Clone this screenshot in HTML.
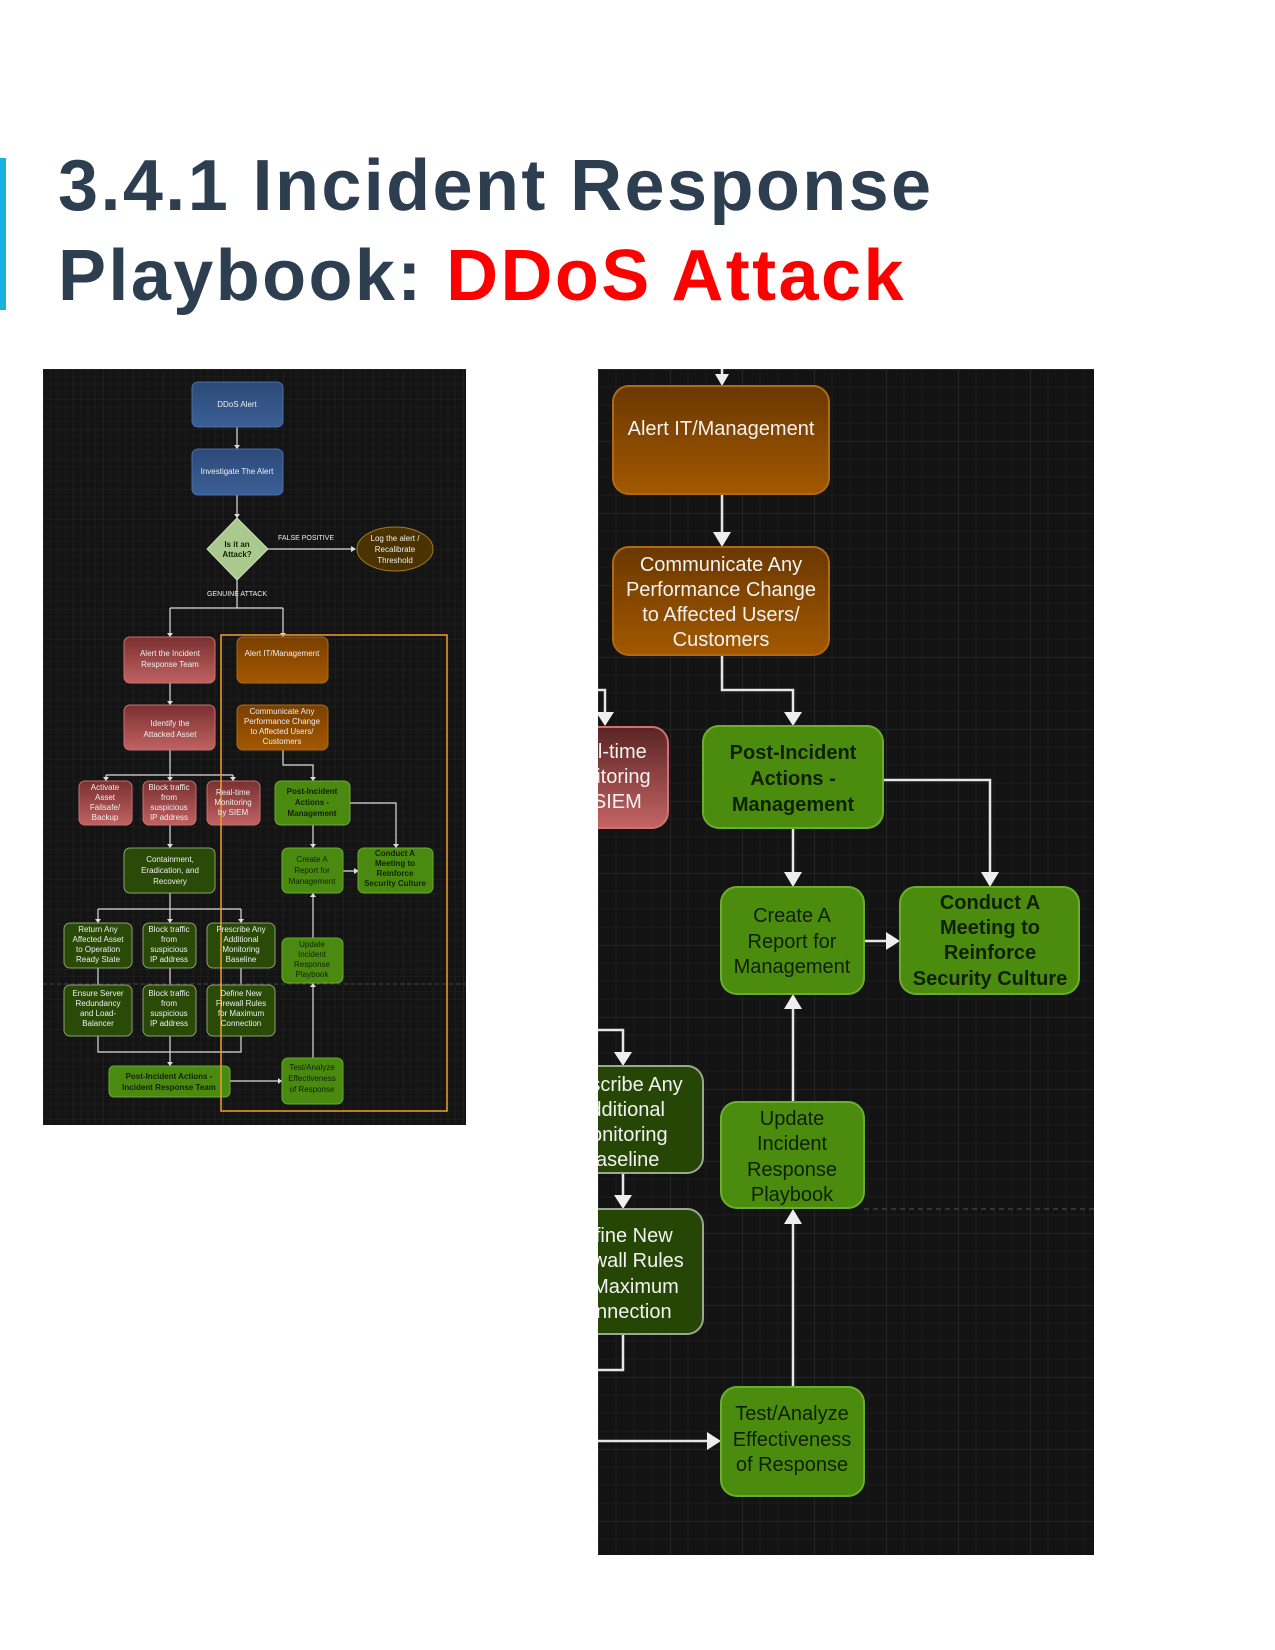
<!DOCTYPE html>
<html><head><meta charset="utf-8"><style>
html,body{margin:0;padding:0;background:#fff;}
body{width:1275px;height:1650px;position:relative;overflow:hidden;font-family:"Liberation Sans",sans-serif;}
.bar{position:absolute;left:0;top:158px;width:6px;height:152px;background:#1ab0e0;}
h1{position:absolute;left:58px;top:141px;margin:0;font-family:"Liberation Sans",sans-serif;font-weight:bold;font-size:72px;line-height:90px;color:#2d3e50;letter-spacing:2.4px;}
h1 span{color:#ff0000;}
svg{position:absolute;display:block;}
</style></head><body>
<div class="bar"></div>
<h1>3.4.1 Incident Response<br>Playbook: <span>DDoS Attack</span></h1>

<svg style="left:43px;top:369px" width="423" height="756" viewBox="43 369 423 756" font-family="Liberation Sans, sans-serif">
<defs>
<pattern id="g1" x="43" y="369" width="30" height="30" patternUnits="userSpaceOnUse">
<path d="M7.5 0V30M15 0V30M22.5 0V30M0 7.5H30M0 15H30M0 22.5H30" stroke="#1f1f1f" stroke-width="0.6"/>
<path d="M0 0V30M0 0H30" stroke="#2c2c2c" stroke-width="0.8"/>
</pattern>
<linearGradient id="lb" x1="0" y1="0" x2="0" y2="1"><stop offset="0" stop-color="#2c4a78"/><stop offset="1" stop-color="#3b5f96"/></linearGradient>
<linearGradient id="lr" x1="0" y1="0" x2="0" y2="1"><stop offset="0" stop-color="#7a3030"/><stop offset="1" stop-color="#c06262"/></linearGradient>
<linearGradient id="lo" x1="0" y1="0" x2="0" y2="1"><stop offset="0" stop-color="#7a3f00"/><stop offset="1" stop-color="#a35800"/></linearGradient>
</defs>
<rect x="43" y="369" width="423" height="756" fill="#141414"/>
<rect x="43" y="369" width="423" height="756" fill="url(#g1)"/>
<g stroke="#ddd" stroke-width="1.2" fill="none">
<path d="M237 427V449M237 495V518M268 549H355M237 580V608M170 608H283M170 608V637M283 608V637M170 683V705M170 750V775M106 775H233M106 775V781M170 775V781M233 775V781M283 750V765H313V781M170 825V848M313 825V848M350 803H396V848M343 871H358M170 893V909M98 909H241M98 909V923M170 909V923M241 909V923M98 968V985M170 968V985M241 968V985M98 1036V1052H241V1036M170 1036V1066M230 1081H282M313 1058V983M313 938V893"/>
</g>
<path d="M43 984H466" stroke="#555" stroke-dasharray="4,3" stroke-width="0.8"/>
<g fill="#ddd">
<path d="M234 445l3 4 3-4z M234 514l3 4 3-4z M351 546l5 3-5 3z M167 633l3 4 3-4z M280 633l3 4 3-4z M167 701l3 4 3-4z M103 777l3 4 3-4z M167 777l3 4 3-4z M230 777l3 4 3-4z M310 777l3 4 3-4z M167 844l3 4 3-4z M310 844l3 4 3-4z M393 844l3 4 3-4z M354 868l5 3-5 3z M95 919l3 4 3-4z M167 919l3 4 3-4z M238 919l3 4 3-4z M167 1062l3 4 3-4z M278 1078l4 3-4 3z M310 897l3-4 3 4z M310 987l3-4 3 4z"/>
</g>
<rect x="192" y="382" width="91" height="45" rx="6" fill="url(#lb)" stroke="#4a6ea8"/>
<rect x="192" y="449" width="91" height="46" rx="6" fill="url(#lb)" stroke="#4a6ea8"/>
<path d="M237 518L268 549L237 580L207 549Z" fill="#a9c98f" stroke="#c8e0b0"/>
<ellipse cx="395" cy="549" rx="38" ry="22" fill="#4a3300" stroke="#a07a20"/>
<rect x="124" y="637" width="91" height="46" rx="6" fill="url(#lr)" stroke="#c87070"/>
<rect x="124" y="705" width="91" height="45" rx="6" fill="url(#lr)" stroke="#c87070"/>
<rect x="237" y="637" width="91" height="46" rx="6" fill="url(#lo)" stroke="#b06a10"/>
<rect x="237" y="705" width="91" height="45" rx="6" fill="url(#lo)" stroke="#b06a10"/>
<rect x="79" y="781" width="53" height="44" rx="6" fill="url(#lr)" stroke="#c87070"/>
<rect x="143" y="781" width="53" height="44" rx="6" fill="url(#lr)" stroke="#c87070"/>
<rect x="207" y="781" width="53" height="44" rx="6" fill="url(#lr)" stroke="#c87070"/>
<rect x="275" y="781" width="75" height="44" rx="6" fill="#4a8a10" stroke="#6aaa30"/>
<rect x="124" y="848" width="91" height="45" rx="6" fill="#2a4a08" stroke="#88a070"/>
<rect x="282" y="848" width="61" height="45" rx="6" fill="#4a8a10" stroke="#6aaa30"/>
<rect x="358" y="848" width="75" height="45" rx="6" fill="#4a8a10" stroke="#6aaa30"/>
<rect x="64" y="923" width="68" height="45" rx="6" fill="#2a4a08" stroke="#88a070"/>
<rect x="143" y="923" width="53" height="45" rx="6" fill="#2a4a08" stroke="#88a070"/>
<rect x="207" y="923" width="68" height="45" rx="6" fill="#2a4a08" stroke="#88a070"/>
<rect x="64" y="985" width="68" height="51" rx="6" fill="#2a4a08" stroke="#88a070"/>
<rect x="143" y="985" width="53" height="51" rx="6" fill="#2a4a08" stroke="#88a070"/>
<rect x="207" y="985" width="68" height="51" rx="6" fill="#2a4a08" stroke="#88a070"/>
<rect x="282" y="938" width="61" height="45" rx="6" fill="#4a8a10" stroke="#6aaa30"/>
<rect x="109" y="1066" width="121" height="31" rx="5" fill="#4a8a10" stroke="#6aaa30"/>
<rect x="282" y="1058" width="61" height="46" rx="6" fill="#4a8a10" stroke="#6aaa30"/>
<rect x="221" y="635" width="226" height="476" fill="none" stroke="#f0a030" stroke-width="1.5"/>
<g font-size="8" fill="#eee" text-anchor="middle">
<text x="237" y="407">DDoS Alert</text>
<text x="237" y="474">Investigate The Alert</text>
<text x="278" y="540" text-anchor="start" font-size="7">FALSE POSITIVE</text>
<text x="395" y="541">Log the alert /</text><text x="395" y="552">Recalibrate</text><text x="395" y="563">Threshold</text>
<text x="237" y="596" font-size="7">GENUINE ATTACK</text>
<text x="170" y="656">Alert the Incident</text><text x="170" y="667">Response Team</text>
<text x="170" y="726">Identify the</text><text x="170" y="737">Attacked Asset</text>
<text x="282" y="656">Alert IT/Management</text>
<text x="282" y="714">Communicate Any</text><text x="282" y="724">Performance Change</text><text x="282" y="734">to Affected Users/</text><text x="282" y="744">Customers</text>
<text x="105" y="790">Activate</text><text x="105" y="800">Asset</text><text x="105" y="810">Failsafe/</text><text x="105" y="820">Backup</text>
<text x="169" y="790">Block traffic</text><text x="169" y="800">from</text><text x="169" y="810">suspicious</text><text x="169" y="820">IP address</text>
<text x="233" y="795">Real-time</text><text x="233" y="805">Monitoring</text><text x="233" y="815">by SIEM</text>
<text x="170" y="862">Containment,</text><text x="170" y="873">Eradication, and</text><text x="170" y="884">Recovery</text>
<text x="98" y="932">Return Any</text><text x="98" y="942">Affected Asset</text><text x="98" y="952">to Operation</text><text x="98" y="962">Ready State</text>
<text x="169" y="932">Block traffic</text><text x="169" y="942">from</text><text x="169" y="952">suspicious</text><text x="169" y="962">IP address</text>
<text x="241" y="932">Prescribe Any</text><text x="241" y="942">Additional</text><text x="241" y="952">Monitoring</text><text x="241" y="962">Baseline</text>
<text x="98" y="996">Ensure Server</text><text x="98" y="1006">Redundancy</text><text x="98" y="1016">and Load-</text><text x="98" y="1026">Balancer</text>
<text x="169" y="996">Block traffic</text><text x="169" y="1006">from</text><text x="169" y="1016">suspicious</text><text x="169" y="1026">IP address</text>
<text x="241" y="996">Define New</text><text x="241" y="1006">Firewall Rules</text><text x="241" y="1016">for Maximum</text><text x="241" y="1026">Connection</text>
</g>
<g font-size="8" fill="#122400" text-anchor="middle">
<text x="237" y="547" font-weight="bold">Is it an</text><text x="237" y="557" font-weight="bold">Attack?</text>
<text x="312" y="794" font-weight="bold">Post-Incident</text><text x="312" y="805" font-weight="bold">Actions -</text><text x="312" y="816" font-weight="bold">Management</text>
<text x="312" y="862">Create A</text><text x="312" y="873">Report for</text><text x="312" y="884">Management</text>
<text x="395" y="856" font-weight="bold">Conduct A</text><text x="395" y="866" font-weight="bold">Meeting to</text><text x="395" y="876" font-weight="bold">Reinforce</text><text x="395" y="886" font-weight="bold">Security Culture</text>
<text x="312" y="947">Update</text><text x="312" y="957">Incident</text><text x="312" y="967">Response</text><text x="312" y="977">Playbook</text>
<text x="169" y="1079" font-weight="bold">Post-Incident Actions -</text><text x="169" y="1090" font-weight="bold">Incident Response Team</text>
<text x="312" y="1070">Test/Analyze</text><text x="312" y="1081">Effectiveness</text><text x="312" y="1092">of Response</text>
</g>
</svg>

<svg style="left:598px;top:369px" width="496" height="1186" viewBox="598 369 496 1186" font-family="Liberation Sans, sans-serif">
<defs>
<pattern id="g2" x="598" y="369" width="72" height="72" patternUnits="userSpaceOnUse">
<path d="M18 0V72M36 0V72M54 0V72M0 18H72M0 36H72M0 54H72" stroke="#1c1c1c" stroke-width="1"/>
<path d="M0 0V72M0 0H72" stroke="#2a2a2a" stroke-width="1.5"/>
</pattern>
<linearGradient id="ro" x1="0" y1="0" x2="0" y2="1"><stop offset="0" stop-color="#6a3800"/><stop offset="1" stop-color="#a35800"/></linearGradient>
<linearGradient id="rr" x1="0" y1="0" x2="0" y2="1"><stop offset="0" stop-color="#5a2424"/><stop offset="1" stop-color="#c46464"/></linearGradient>
</defs>
<rect x="598" y="369" width="496" height="1186" fill="#131313"/>
<rect x="598" y="369" width="496" height="1186" fill="url(#g2)"/>
<path d="M864 1209H1094" stroke="#555" stroke-dasharray="5,4" stroke-width="1"/>
<g stroke="#e6e6e6" stroke-width="2.5" fill="none">
<path d="M722 369V380M722 494V540M722 655V690H793V720M598 690H605V720M793 828V880M883 780H990V880M864 941H893M793 1102V1002M793 1387V1215M598 1030H623V1060M623 1173V1203M623 1334V1370H598M598 1441H715"/>
</g>
<g fill="#eee">
<path d="M715 374l7 12 7-12z M713 532l9 15 9-15z M784 712l9 14 9-14z M596 712l9 14 9-14z M784 872l9 15 9-15z M981 872l9 15 9-15z M886 932l14 9-14 9z M784 1009l9-15 9 15z M614 1052l9 14 9-14z M614 1195l9 14 9-14z M784 1224l9-15 9 15z M707 1432l14 9-14 9z"/>
</g>
<rect x="613" y="386" width="216" height="108" rx="16" fill="url(#ro)" stroke="#b06a10" stroke-width="2"/>
<rect x="613" y="547" width="216" height="108" rx="16" fill="url(#ro)" stroke="#b06a10" stroke-width="2"/>
<rect x="541" y="727" width="127" height="101" rx="16" fill="url(#rr)" stroke="#d07070" stroke-width="2"/>
<rect x="703" y="726" width="180" height="102" rx="16" fill="#4b8c0e" stroke="#6cae2c" stroke-width="2"/>
<rect x="721" y="887" width="143" height="107" rx="16" fill="#4b8c0e" stroke="#6cae2c" stroke-width="2"/>
<rect x="900" y="887" width="179" height="107" rx="16" fill="#4b8c0e" stroke="#6cae2c" stroke-width="2"/>
<rect x="540" y="1066" width="163" height="107" rx="16" fill="#264606" stroke="#9aa890" stroke-width="2"/>
<rect x="721" y="1102" width="143" height="106" rx="16" fill="#4b8c0e" stroke="#6cae2c" stroke-width="2"/>
<rect x="540" y="1209" width="163" height="125" rx="16" fill="#264606" stroke="#9aa890" stroke-width="2"/>
<rect x="721" y="1387" width="143" height="109" rx="16" fill="#4b8c0e" stroke="#6cae2c" stroke-width="2"/>
<g font-size="20" fill="#f2f2f2" text-anchor="middle">
<text x="721" y="435">Alert IT/Management</text>
<text x="721" y="571">Communicate Any</text><text x="721" y="596">Performance Change</text><text x="721" y="621">to Affected Users/</text><text x="721" y="646">Customers</text>
<text x="604" y="758">Real-time</text><text x="604" y="783">Monitoring</text><text x="604" y="808">by SIEM</text>
<text x="621" y="1091">Prescribe Any</text><text x="621" y="1116">Additional</text><text x="621" y="1141">Monitoring</text><text x="621" y="1166">Baseline</text>
<text x="621" y="1242">Define New</text><text x="621" y="1267">Firewall Rules</text><text x="621" y="1293">for Maximum</text><text x="621" y="1318">Connection</text>
</g>
<g font-size="20" fill="#0f2000" text-anchor="middle">
<text x="793" y="759" font-weight="bold">Post-Incident</text><text x="793" y="785" font-weight="bold">Actions -</text><text x="793" y="811" font-weight="bold">Management</text>
<text x="792" y="922">Create A</text><text x="792" y="948">Report for</text><text x="792" y="973">Management</text>
<text x="990" y="909" font-weight="bold">Conduct A</text><text x="990" y="934" font-weight="bold">Meeting to</text><text x="990" y="959" font-weight="bold">Reinforce</text><text x="990" y="985" font-weight="bold">Security Culture</text>
<text x="792" y="1125">Update</text><text x="792" y="1150">Incident</text><text x="792" y="1176">Response</text><text x="792" y="1201">Playbook</text>
<text x="792" y="1420">Test/Analyze</text><text x="792" y="1446">Effectiveness</text><text x="792" y="1471">of Response</text>
</g>
</svg>
</body></html>
